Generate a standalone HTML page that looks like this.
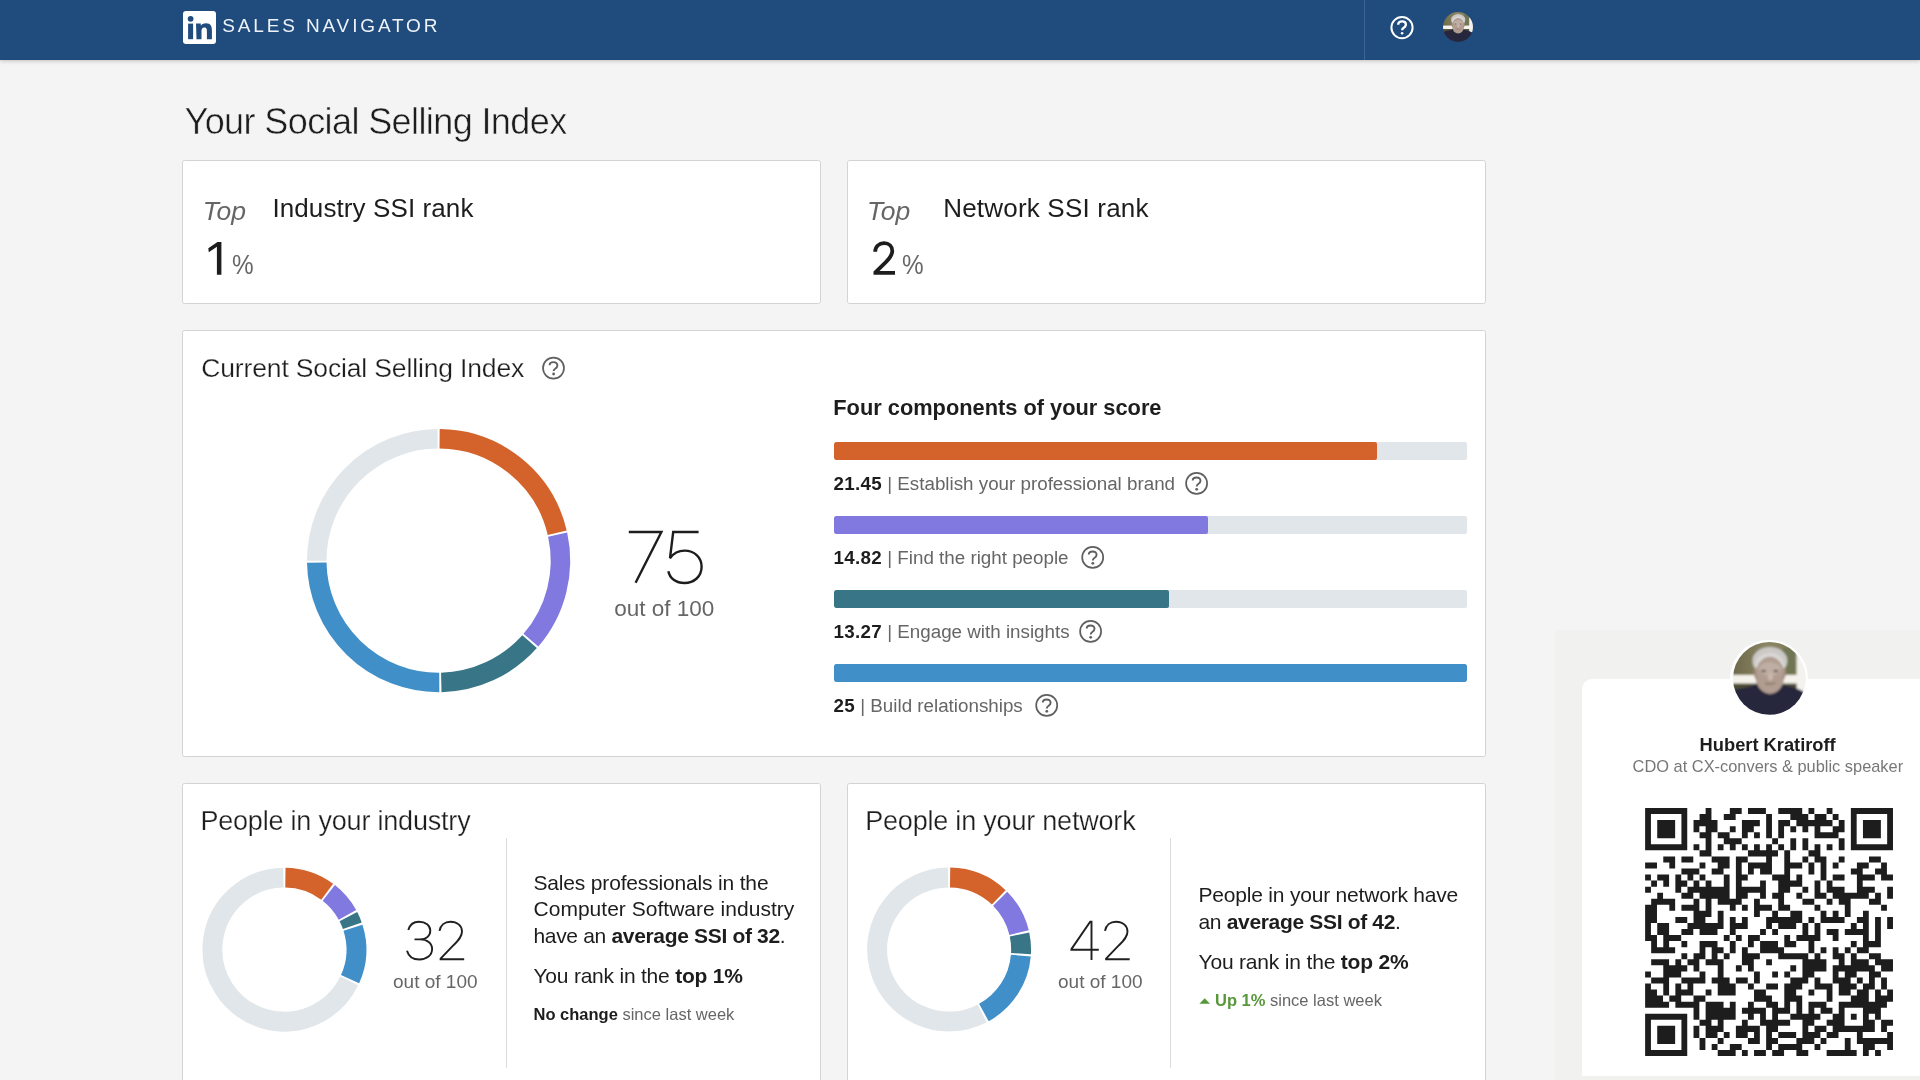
<!DOCTYPE html>
<html>
<head>
<meta charset="utf-8">
<title>Social Selling Index</title>
<style>
html,body{margin:0;padding:0;}
body{width:1920px;height:1080px;overflow:hidden;transform:translateZ(0);background:#f4f4f4;font-family:"Liberation Sans",sans-serif;color:#1d1d1d;position:relative;}
.abs{position:absolute;white-space:nowrap;line-height:1;}
#hdr{position:absolute;left:0;top:0;width:1920px;height:60px;background:#204b7d;box-shadow:0 1px 4px rgba(0,0,0,.22);}
.card{position:absolute;background:#fff;border:1px solid #d3d3d3;border-radius:2.5px;box-sizing:border-box;}
.g{color:#666;}
.thinw{-webkit-text-stroke:0.25px #fff;}
.thing{-webkit-text-stroke:0.5px #f4f4f4;}
.b{font-weight:bold;}
.bar{position:absolute;left:834px;width:633px;height:18px;background:#e1e6ea;border-radius:2px;overflow:hidden;}
.bar i{display:block;height:18px;border-radius:2px;}
.lbl{font-size:18.8px;color:#666;}
.lbl b{color:#1d1d1d;letter-spacing:.3px;}
.txt{font-size:21px;color:#1d1d1d;}
.sm{font-size:16.5px;color:#666;}
.sm b{color:#1d1d1d;}
svg{position:absolute;left:0;top:0;overflow:visible;}
</style>
</head>
<body>

<!-- photo symbol -->
<svg width="0" height="0" style="position:absolute">
<defs>
<filter id="blr" x="-10%" y="-10%" width="120%" height="120%"><feGaussianBlur stdDeviation="0.9"/></filter>
<clipPath id="cc"><circle cx="36.5" cy="36.5" r="36.5"/></clipPath>
<linearGradient id="bgG" x1="0" y1="0" x2="1" y2="0"><stop offset="0" stop-color="#6b6648"/><stop offset=".45" stop-color="#8a8463"/><stop offset="1" stop-color="#7c7a58"/></linearGradient>
<g id="photo" clip-path="url(#cc)">
 <g filter="url(#blr)">
  <rect x="-4" y="-4" width="81" height="81" fill="url(#bgG)"/>
  <rect x="50" y="6" width="12" height="27" fill="#6f7553"/>
  <rect x="-4" y="33" width="70" height="8.8" fill="#f5f2ec"/>
  <rect x="-4" y="41.8" width="70" height="6" fill="#4e4b36"/>
  <rect x="63.8" y="10" width="14" height="42" fill="#f4f2ee"/>
  <path d="M-4 48C6 47 17 45 23 42.5H47C56 44 65 46 71 50L77 77H-4Z" fill="#25283c"/>
  <path d="M25 40H46V47C42 53 30 53 25 47Z" fill="#a48c7e"/>
  <path d="M23.5 42.5C27 54 44 54 47.5 42.5" fill="none" stroke="#15172a" stroke-width="2"/>
  <ellipse cx="37" cy="19" rx="17.5" ry="14" fill="#cbc9c6"/>
  <path d="M22 28C22 16 28 11 37 11S52 16 52 28" fill="#d9d8d6"/>
  <ellipse cx="37" cy="33.5" rx="14.6" ry="18.6" fill="#b09c90"/>
  <ellipse cx="37" cy="27" rx="11" ry="7" fill="#bfaea3"/>
  <ellipse cx="30.6" cy="29.2" rx="2.6" ry="1.1" fill="#5d4d45"/>
  <ellipse cx="43" cy="29.2" rx="2.6" ry="1.1" fill="#5d4d45"/>
  <ellipse cx="37.5" cy="35" rx="2.6" ry="3.4" fill="#cdb7aa"/>
  <path d="M32.5 41.2C35 42.4 40 42.4 42.5 40.8" fill="none" stroke="#8d6c62" stroke-width="1.3"/>
  <path d="M22.4 26C21 30 22 34 24 37M51.6 26C53 30 52 34 50 37" fill="none" stroke="#a08878" stroke-width="2"/>
 </g>
</g>
</defs>
</svg>

<!-- HEADER -->
<div id="hdr">
  <div class="abs" style="left:183px;top:11px;width:33px;height:33px;background:#fff;border-radius:3px;"></div>
  <svg width="1920" height="60" viewBox="0 0 1920 60">
    <!-- "in" glyph -->
    <g fill="#204b7d" transform="translate(-0.6 -0.4)">
      <circle cx="191.2" cy="19.2" r="2.9"/>
      <rect x="188.7" y="24" width="5" height="15.6"/>
      <path d="M196.6 24h4.8v2.2c.8-1.4 2.6-2.6 5.2-2.6 5 0 5.9 3.3 5.9 7.5v8.5h-5v-7.5c0-1.8 0-4.1-2.5-4.1s-2.9 2-2.9 4v7.6h-5z"/>
    </g>
    <line x1="1364.5" y1="0" x2="1364.5" y2="60" stroke="#3d6593" stroke-width="1"/>
    <!-- help -->
    <circle cx="1402" cy="27.6" r="10.6" fill="none" stroke="#fff" stroke-width="2"/>
    <path d="M1398.2 24.7c0-2.1 1.6-3.4 3.9-3.4s3.8 1.3 3.8 3.3c0 1.6-1 2.4-2.1 3.1c-1.1.7-1.7 1.3-1.7 2.6" fill="none" stroke="#fff" stroke-width="2.3"/>
    <circle cx="1402.1" cy="33.3" r="1.3" fill="#fff"/>
  </svg>
  <div class="abs" id="salesnav" style="left:222.3px;top:15.9px;font-size:19px;letter-spacing:2.85px;color:#eef3f9;">SALES NAVIGATOR</div>
  <!-- avatar small -->
  <svg style="left:1442.5px;top:12px" width="30" height="30" viewBox="0 0 73 73"><use href="#photo"/></svg>
</div>

<!-- TITLE -->
<div class="abs thing" id="title" style="left:184.6px;top:103.73px;font-size:36px;letter-spacing:-0.6px;">Your Social Selling Index</div>

<!-- TOP CARDS -->
<div class="card" style="left:182.2px;top:159.9px;width:639.2px;height:144.6px;"></div>
<div class="card" style="left:846.9px;top:159.9px;width:639.4px;height:144.6px;"></div>

<div class="abs g" id="top1" style="left:202.7px;top:198.4px;font-size:26.5px;font-style:italic;">Top</div>
<div class="abs" id="ind_rank" style="left:272.4px;top:194.69px;font-size:26px;letter-spacing:0.1px;">Industry SSI rank</div>
<div class="abs g" id="pct1" style="left:231.6px;top:251.74px;font-size:27px;transform:scaleX(.9);transform-origin:0 0;">%</div>

<div class="abs g" id="top2" style="left:866.9px;top:198.4px;font-size:26.5px;font-style:italic;">Top</div>
<div class="abs" id="net_rank" style="left:943.2px;top:194.69px;font-size:26px;letter-spacing:0.2px;">Network SSI rank</div>
<div class="abs g" id="pct2" style="left:901.8px;top:251.74px;font-size:27px;transform:scaleX(.9);transform-origin:0 0;">%</div>

<!-- MAIN CARD -->
<div class="card" style="left:182.2px;top:329.9px;width:1304.1px;height:427px;"></div>
<div class="abs thinw" id="cur" style="left:201.3px;top:354.67px;font-size:26.5px;letter-spacing:-0.15px;">Current Social Selling Index</div>

<div class="abs b" id="four" style="left:833.3px;top:396.95px;font-size:21.8px;">Four components of your score</div>

<div class="bar" style="top:442px;"><i style="width:543px;background:#d4622b;"></i></div>
<div class="bar" style="top:516px;"><i style="width:374px;background:#8178e0;"></i></div>
<div class="bar" style="top:590px;"><i style="width:335px;background:#377587;"></i></div>
<div class="bar" style="top:664px;"><i style="width:633px;background:#408fc8;"></i></div>

<div class="abs lbl" id="l1" style="left:833.5px;top:474.82px;"><b>21.45</b> | Establish your professional brand</div>
<div class="abs lbl" id="l2" style="left:833.5px;top:548.82px;"><b>14.82</b> | Find the right people</div>
<div class="abs lbl" id="l3" style="left:833.5px;top:622.82px;"><b>13.27</b> | Engage with insights</div>
<div class="abs lbl" id="l4" style="left:833.5px;top:696.82px;"><b>25</b> | Build relationships</div>

<div class="abs g" id="out1" style="left:614.3px;top:597.95px;font-size:22.5px;">out of 100</div>

<!-- BOTTOM CARDS -->
<div class="card" style="left:182.2px;top:782.5px;width:639.2px;height:320px;"></div>
<div class="card" style="left:846.9px;top:782.5px;width:639.4px;height:320px;"></div>
<div class="abs thinw" id="pind" style="left:200.4px;top:807.8px;font-size:27px;letter-spacing:-0.2px;">People in your industry</div>
<div class="abs thinw" id="pnet" style="left:865.2px;top:807.8px;font-size:27px;letter-spacing:-0.2px;">People in your network</div>
<div class="abs" style="left:505.5px;top:838px;width:1px;height:230px;background:#dcdcdc;"></div>
<div class="abs" style="left:1170px;top:838px;width:1px;height:230px;background:#dcdcdc;"></div>

<div class="abs g" id="out2" style="left:393px;top:971.92px;font-size:19px;">out of 100</div>
<div class="abs g" id="out3" style="left:1058px;top:971.92px;font-size:19px;">out of 100</div>

<div class="abs txt" id="t1a" style="left:533.5px;top:872.02px;letter-spacing:-0.17px;">Sales professionals in the</div>
<div class="abs txt" id="t1b" style="left:533.5px;top:898.42px;letter-spacing:0.02px;">Computer Software industry</div>
<div class="abs txt" id="t1c" style="left:533.5px;top:924.92px;letter-spacing:-0.33px;">have an <b>average SSI of 32</b>.</div>
<div class="abs txt" id="t1d" style="left:533.5px;top:964.52px;letter-spacing:-0.22px;">You rank in the <b>top 1%</b></div>
<div class="abs sm" id="t1e" style="left:533.5px;top:1005.93px;"><b>No change</b> since last week</div>

<div class="abs txt" id="t2a" style="left:1198.5px;top:884.12px;letter-spacing:-0.2px;">People in your network have</div>
<div class="abs txt" id="t2b" style="left:1198.5px;top:911.02px;letter-spacing:-0.33px;">an <b>average SSI of 42</b>.</div>
<div class="abs txt" id="t2c" style="left:1198.5px;top:951.12px;letter-spacing:-0.18px;">You rank in the <b>top 2%</b></div>
<div class="abs sm" id="t2d" style="left:1215px;top:991.93px;"><b style="color:#57983a;">Up 1%</b> since last week</div>

<!-- SVG LAYER: donuts, big numerals, help icons -->
<svg width="1920" height="1080" viewBox="0 0 1920 1080">
<path d="M439.60 438.75A121.85 121.85 0 0 1 557.21 532.67" fill="none" stroke="#d4622b" stroke-width="19.5"/>
<path d="M557.65 534.62A121.85 121.85 0 0 1 530.91 640.14" fill="none" stroke="#8178e0" stroke-width="19.5"/>
<path d="M529.59 641.64A121.85 121.85 0 0 1 441.28 682.42" fill="none" stroke="#377587" stroke-width="19.5"/>
<path d="M439.28 682.45A121.85 121.85 0 0 1 316.77 562.67" fill="none" stroke="#408fc8" stroke-width="19.5"/>
<path d="M316.75 560.67A121.85 121.85 0 0 1 437.60 438.75" fill="none" stroke="#e1e6ea" stroke-width="19.5"/>
<path d="M285.40 877.61A72.0 72.0 0 0 1 327.19 891.70" fill="none" stroke="#d4622b" stroke-width="19.9"/>
<path d="M328.78 892.91A72.0 72.0 0 0 1 347.45 914.83" fill="none" stroke="#8178e0" stroke-width="19.9"/>
<path d="M348.39 916.59A72.0 72.0 0 0 1 352.34 925.76" fill="none" stroke="#377587" stroke-width="19.9"/>
<path d="M352.97 927.66A72.0 72.0 0 0 1 350.06 979.14" fill="none" stroke="#408fc8" stroke-width="19.9"/>
<path d="M349.21 980.95A72.0 72.0 0 1 1 283.40 877.61" fill="none" stroke="#e1e6ea" stroke-width="19.9"/>
<path d="M950.10 877.51A72.0 72.0 0 0 1 998.75 897.35" fill="none" stroke="#d4622b" stroke-width="19.9"/>
<path d="M1000.17 898.75A72.0 72.0 0 0 1 1019.08 932.56" fill="none" stroke="#8178e0" stroke-width="19.9"/>
<path d="M1019.52 934.51A72.0 72.0 0 0 1 1020.98 953.61" fill="none" stroke="#377587" stroke-width="19.9"/>
<path d="M1020.84 955.60A72.0 72.0 0 0 1 983.91 1012.53" fill="none" stroke="#408fc8" stroke-width="19.9"/>
<path d="M982.15 1013.47A72.0 72.0 0 1 1 948.10 877.51" fill="none" stroke="#e1e6ea" stroke-width="19.9"/>
<!-- 75 -->
<g fill="none" stroke="#1d1d1d" stroke-width="2.4" stroke-linejoin="miter">
  <path d="M628.8 532h32.6L635.6 582.8"/>
  <path d="M698.6 532H673.2L670 558.2c3.2-4.6 8.4-7.6 14.6-7.6c9.6 0 17 6.6 17 16.2s-7.4 16.2-17.2 16.2c-8.4 0-14.8-4.8-16-11.8"/>
</g>
<!-- 1 and 2 (top cards) -->
<path d="M221.4 241.9H217.5L208.3 248.3L208.8 252.3L216.9 246.7V274.7H221.4Z" fill="#1d1d1d"/>
<path d="M875.2 251.8C875.2 246.6 879 243.1 884 243.1C889 243.1 892.3 246.5 892.3 250.9C892.3 255.4 889.6 258.5 885.6 262.4L875.4 272.4V272.8H895" fill="none" stroke="#1d1d1d" stroke-width="3.8"/>
<!-- 32 -->
<g fill="none" stroke="#202020" stroke-width="1.9">
<path d="M408.3 930.1C409.6 925 413.6 921.7 419 921.7C425.6 921.7 430.3 925.4 430.3 930.5C430.3 935.6 426.6 939.4 420 939.4H414.5M420 939.4C427 939.4 432.1 943.2 432.1 949C432.1 955.2 426.8 959.5 419.4 959.5C412.8 959.5 408.4 955.8 407 950.7"/>
<path id="two32" d="M439.5 930.9C440.4 925.4 444.6 921.7 450.5 921.7C457 921.7 462 925.6 462 931.4C462 936.5 458.5 940.3 453.5 945.2L440.6 958.6V959.2H464.2"/>
<!-- 42 -->
<path d="M1091.5 960V921.6H1090.2L1071.4 949.1V949.7H1098.8"/>
<path d="M439.5 930.9C440.4 925.4 444.6 921.7 450.5 921.7C457 921.7 462 925.6 462 931.4C462 936.5 458.5 940.3 453.5 945.2L440.6 958.6V959.2H464.2" transform="translate(665.5 0)"/>
</g>
<!-- help icons -->
<defs><g id="help" fill="none" stroke="#5f5f5f" stroke-width="1.7"><circle cx="0" cy="0" r="10.5"/><path d="M-3.9 -2.9C-3.9 -4.9 -2.2 -5.95 0 -5.95S3.9 -4.7 3.9 -2.6C3.9 -0.9 2.8 -0.1 1.7 0.6C0.6 1.3 0.1 1.8 0.1 3" stroke-width="1.9"/><circle cx="0.1" cy="5.9" r="1.4" fill="#5f5f5f" stroke="none"/></g></defs>
<use href="#help" x="553.5" y="368.1"/>
<use href="#help" x="1196.6" y="483.4"/>
<use href="#help" x="1092.7" y="557.4"/>
<use href="#help" x="1090.6" y="631.4"/>
<use href="#help" x="1046.7" y="705.4"/>
<!-- triangle up -->
<path d="M1199.4 1003.8l5.3-5.6l5.3 5.6z" fill="#57983a"/>
</svg>

<!-- RIGHT OVERLAY -->
<div class="abs" style="left:1555px;top:630px;width:365px;height:450px;background:#f1f1ef;"></div>
<div class="abs" style="left:1581.7px;top:678.7px;width:340px;height:397px;background:#fff;border-top-left-radius:10px;"></div>
<div class="abs" id="avatar" style="left:1730.4px;top:640px;width:77.2px;height:77.2px;border-radius:50%;background:#fff;"></div>
<svg style="left:1732.7px;top:642.2px" width="72.8" height="72.8" viewBox="0 0 73 73"><use href="#photo"/></svg>
<div class="abs b" id="name" style="left:1699.6px;top:735.51px;font-size:18.3px;">Hubert Kratiroff</div>
<div class="abs g" id="sub" style="left:1632.6px;top:757.62px;font-size:16.4px;color:#777;">CDO at CX-convers &amp; public speaker</div>
<svg style="position:absolute;left:1644.6px;top:808.2px" width="248.1" height="248.1" viewBox="0 0 41 41"><path d="M0.02 0h6.96v1h-6.96zM10.02 0h0.96v1h-0.96zM14.02 0h1.96v1h-1.96zM17.02 0h2.96v1h-2.96zM22.02 0h3.96v1h-3.96zM27.02 0h0.96v1h-0.96zM30.02 0h0.96v1h-0.96zM34.02 0h6.96v1h-6.96zM0.02 1h0.96v1h-0.96zM6.02 1h0.96v1h-0.96zM9.02 1h1.96v1h-1.96zM13.02 1h1.96v1h-1.96zM20.02 1h0.96v1h-0.96zM24.02 1h2.96v1h-2.96zM28.02 1h1.96v1h-1.96zM31.02 1h0.96v1h-0.96zM34.02 1h0.96v1h-0.96zM40.02 1h0.96v1h-0.96zM0.02 2h0.96v1h-0.96zM2.02 2h2.96v1h-2.96zM6.02 2h0.96v1h-0.96zM8.02 2h3.96v1h-3.96zM16.02 2h2.96v1h-2.96zM20.02 2h0.96v1h-0.96zM22.02 2h1.96v1h-1.96zM25.02 2h5.96v1h-5.96zM32.02 2h0.96v1h-0.96zM34.02 2h0.96v1h-0.96zM36.02 2h2.96v1h-2.96zM40.02 2h0.96v1h-0.96zM0.02 3h0.96v1h-0.96zM2.02 3h2.96v1h-2.96zM6.02 3h0.96v1h-0.96zM8.02 3h0.96v1h-0.96zM10.02 3h1.96v1h-1.96zM14.02 3h0.96v1h-0.96zM16.02 3h1.96v1h-1.96zM20.02 3h0.96v1h-0.96zM22.02 3h0.96v1h-0.96zM24.02 3h0.96v1h-0.96zM26.02 3h0.96v1h-0.96zM28.02 3h0.96v1h-0.96zM31.02 3h1.96v1h-1.96zM34.02 3h0.96v1h-0.96zM36.02 3h2.96v1h-2.96zM40.02 3h0.96v1h-0.96zM0.02 4h0.96v1h-0.96zM2.02 4h2.96v1h-2.96zM6.02 4h0.96v1h-0.96zM9.02 4h1.96v1h-1.96zM12.02 4h1.96v1h-1.96zM16.02 4h0.96v1h-0.96zM18.02 4h0.96v1h-0.96zM20.02 4h0.96v1h-0.96zM22.02 4h0.96v1h-0.96zM28.02 4h3.96v1h-3.96zM34.02 4h0.96v1h-0.96zM36.02 4h2.96v1h-2.96zM40.02 4h0.96v1h-0.96zM0.02 5h0.96v1h-0.96zM6.02 5h0.96v1h-0.96zM10.02 5h0.96v1h-0.96zM13.02 5h2.96v1h-2.96zM21.02 5h0.96v1h-0.96zM24.02 5h0.96v1h-0.96zM26.02 5h0.96v1h-0.96zM32.02 5h0.96v1h-0.96zM34.02 5h0.96v1h-0.96zM40.02 5h0.96v1h-0.96zM0.02 6h6.96v1h-6.96zM8.02 6h0.96v1h-0.96zM10.02 6h0.96v1h-0.96zM12.02 6h0.96v1h-0.96zM14.02 6h0.96v1h-0.96zM16.02 6h0.96v1h-0.96zM18.02 6h0.96v1h-0.96zM20.02 6h0.96v1h-0.96zM22.02 6h0.96v1h-0.96zM24.02 6h0.96v1h-0.96zM26.02 6h0.96v1h-0.96zM28.02 6h0.96v1h-0.96zM30.02 6h0.96v1h-0.96zM32.02 6h0.96v1h-0.96zM34.02 6h6.96v1h-6.96zM9.02 7h1.96v1h-1.96zM17.02 7h4.96v1h-4.96zM23.02 7h0.96v1h-0.96zM27.02 7h1.96v1h-1.96zM3.02 8h1.96v1h-1.96zM6.02 8h1.96v1h-1.96zM11.02 8h2.96v1h-2.96zM15.02 8h1.96v1h-1.96zM20.02 8h0.96v1h-0.96zM23.02 8h0.96v1h-0.96zM26.02 8h0.96v1h-0.96zM28.02 8h1.96v1h-1.96zM32.02 8h0.96v1h-0.96zM37.02 8h1.96v1h-1.96zM0.02 9h1.96v1h-1.96zM4.02 9h0.96v1h-0.96zM9.02 9h0.96v1h-0.96zM12.02 9h1.96v1h-1.96zM15.02 9h0.96v1h-0.96zM17.02 9h3.96v1h-3.96zM23.02 9h2.96v1h-2.96zM27.02 9h0.96v1h-0.96zM29.02 9h0.96v1h-0.96zM31.02 9h0.96v1h-0.96zM35.02 9h1.96v1h-1.96zM39.02 9h0.96v1h-0.96zM6.02 10h2.96v1h-2.96zM11.02 10h1.96v1h-1.96zM15.02 10h0.96v1h-0.96zM17.02 10h0.96v1h-0.96zM19.02 10h1.96v1h-1.96zM23.02 10h0.96v1h-0.96zM27.02 10h0.96v1h-0.96zM29.02 10h0.96v1h-0.96zM34.02 10h1.96v1h-1.96zM38.02 10h1.96v1h-1.96zM0.02 11h0.96v1h-0.96zM2.02 11h1.96v1h-1.96zM5.02 11h0.96v1h-0.96zM7.02 11h0.96v1h-0.96zM9.02 11h0.96v1h-0.96zM13.02 11h0.96v1h-0.96zM15.02 11h1.96v1h-1.96zM21.02 11h2.96v1h-2.96zM25.02 11h0.96v1h-0.96zM29.02 11h0.96v1h-0.96zM31.02 11h1.96v1h-1.96zM35.02 11h2.96v1h-2.96zM39.02 11h1.96v1h-1.96zM1.02 12h0.96v1h-0.96zM3.02 12h0.96v1h-0.96zM5.02 12h1.96v1h-1.96zM8.02 12h0.96v1h-0.96zM10.02 12h0.96v1h-0.96zM13.02 12h0.96v1h-0.96zM15.02 12h0.96v1h-0.96zM19.02 12h0.96v1h-0.96zM22.02 12h3.96v1h-3.96zM28.02 12h0.96v1h-0.96zM30.02 12h0.96v1h-0.96zM35.02 12h0.96v1h-0.96zM0.02 13h0.96v1h-0.96zM5.02 13h0.96v1h-0.96zM7.02 13h6.96v1h-6.96zM15.02 13h4.96v1h-4.96zM22.02 13h1.96v1h-1.96zM26.02 13h0.96v1h-0.96zM28.02 13h0.96v1h-0.96zM30.02 13h2.96v1h-2.96zM35.02 13h2.96v1h-2.96zM40.02 13h0.96v1h-0.96zM2.02 14h0.96v1h-0.96zM6.02 14h1.96v1h-1.96zM9.02 14h4.96v1h-4.96zM15.02 14h1.96v1h-1.96zM19.02 14h0.96v1h-0.96zM21.02 14h1.96v1h-1.96zM25.02 14h0.96v1h-0.96zM28.02 14h1.96v1h-1.96zM31.02 14h5.96v1h-5.96zM38.02 14h0.96v1h-0.96zM40.02 14h0.96v1h-0.96zM1.02 15h3.96v1h-3.96zM8.02 15h0.96v1h-0.96zM10.02 15h0.96v1h-0.96zM12.02 15h3.96v1h-3.96zM18.02 15h0.96v1h-0.96zM22.02 15h0.96v1h-0.96zM26.02 15h1.96v1h-1.96zM30.02 15h0.96v1h-0.96zM32.02 15h1.96v1h-1.96zM37.02 15h1.96v1h-1.96zM0.02 16h1.96v1h-1.96zM4.02 16h0.96v1h-0.96zM6.02 16h2.96v1h-2.96zM10.02 16h0.96v1h-0.96zM14.02 16h0.96v1h-0.96zM16.02 16h0.96v1h-0.96zM18.02 16h2.96v1h-2.96zM22.02 16h1.96v1h-1.96zM28.02 16h0.96v1h-0.96zM33.02 16h0.96v1h-0.96zM39.02 16h0.96v1h-0.96zM0.02 17h1.96v1h-1.96zM8.02 17h2.96v1h-2.96zM12.02 17h0.96v1h-0.96zM18.02 17h0.96v1h-0.96zM21.02 17h0.96v1h-0.96zM24.02 17h1.96v1h-1.96zM29.02 17h0.96v1h-0.96zM31.02 17h0.96v1h-0.96zM33.02 17h0.96v1h-0.96zM36.02 17h0.96v1h-0.96zM0.02 18h1.96v1h-1.96zM5.02 18h1.96v1h-1.96zM8.02 18h1.96v1h-1.96zM12.02 18h0.96v1h-0.96zM14.02 18h0.96v1h-0.96zM16.02 18h0.96v1h-0.96zM20.02 18h5.96v1h-5.96zM27.02 18h0.96v1h-0.96zM29.02 18h3.96v1h-3.96zM35.02 18h1.96v1h-1.96zM38.02 18h0.96v1h-0.96zM40.02 18h0.96v1h-0.96zM0.02 19h0.96v1h-0.96zM2.02 19h1.96v1h-1.96zM7.02 19h5.96v1h-5.96zM14.02 19h2.96v1h-2.96zM20.02 19h0.96v1h-0.96zM22.02 19h2.96v1h-2.96zM26.02 19h0.96v1h-0.96zM28.02 19h0.96v1h-0.96zM34.02 19h0.96v1h-0.96zM36.02 19h0.96v1h-0.96zM38.02 19h0.96v1h-0.96zM40.02 19h0.96v1h-0.96zM0.02 20h0.96v1h-0.96zM2.02 20h1.96v1h-1.96zM6.02 20h1.96v1h-1.96zM9.02 20h2.96v1h-2.96zM14.02 20h0.96v1h-0.96zM19.02 20h0.96v1h-0.96zM21.02 20h0.96v1h-0.96zM26.02 20h0.96v1h-0.96zM28.02 20h0.96v1h-0.96zM30.02 20h1.96v1h-1.96zM33.02 20h3.96v1h-3.96zM38.02 20h0.96v1h-0.96zM0.02 21h1.96v1h-1.96zM3.02 21h2.96v1h-2.96zM13.02 21h0.96v1h-0.96zM15.02 21h0.96v1h-0.96zM17.02 21h1.96v1h-1.96zM23.02 21h0.96v1h-0.96zM25.02 21h3.96v1h-3.96zM31.02 21h0.96v1h-0.96zM36.02 21h0.96v1h-0.96zM38.02 21h0.96v1h-0.96zM1.02 22h0.96v1h-0.96zM3.02 22h0.96v1h-0.96zM6.02 22h0.96v1h-0.96zM9.02 22h2.96v1h-2.96zM14.02 22h0.96v1h-0.96zM17.02 22h0.96v1h-0.96zM19.02 22h2.96v1h-2.96zM23.02 22h1.96v1h-1.96zM27.02 22h0.96v1h-0.96zM34.02 22h0.96v1h-0.96zM36.02 22h2.96v1h-2.96zM1.02 23h3.96v1h-3.96zM9.02 23h0.96v1h-0.96zM11.02 23h1.96v1h-1.96zM14.02 23h0.96v1h-0.96zM16.02 23h0.96v1h-0.96zM19.02 23h3.96v1h-3.96zM27.02 23h0.96v1h-0.96zM29.02 23h0.96v1h-0.96zM31.02 23h0.96v1h-0.96zM33.02 23h0.96v1h-0.96zM35.02 23h1.96v1h-1.96zM6.02 24h0.96v1h-0.96zM8.02 24h1.96v1h-1.96zM11.02 24h0.96v1h-0.96zM13.02 24h0.96v1h-0.96zM16.02 24h2.96v1h-2.96zM22.02 24h4.96v1h-4.96zM28.02 24h0.96v1h-0.96zM31.02 24h1.96v1h-1.96zM34.02 24h0.96v1h-0.96zM37.02 24h1.96v1h-1.96zM1.02 25h2.96v1h-2.96zM5.02 25h0.96v1h-0.96zM7.02 25h1.96v1h-1.96zM10.02 25h2.96v1h-2.96zM16.02 25h1.96v1h-1.96zM20.02 25h0.96v1h-0.96zM26.02 25h3.96v1h-3.96zM32.02 25h0.96v1h-0.96zM34.02 25h2.96v1h-2.96zM38.02 25h2.96v1h-2.96zM3.02 26h3.96v1h-3.96zM8.02 26h0.96v1h-0.96zM12.02 26h0.96v1h-0.96zM15.02 26h0.96v1h-0.96zM17.02 26h0.96v1h-0.96zM24.02 26h0.96v1h-0.96zM26.02 26h3.96v1h-3.96zM31.02 26h6.96v1h-6.96zM39.02 26h1.96v1h-1.96zM0.02 27h0.96v1h-0.96zM3.02 27h2.96v1h-2.96zM9.02 27h0.96v1h-0.96zM12.02 27h0.96v1h-0.96zM18.02 27h0.96v1h-0.96zM21.02 27h0.96v1h-0.96zM23.02 27h0.96v1h-0.96zM26.02 27h1.96v1h-1.96zM31.02 27h0.96v1h-0.96zM33.02 27h1.96v1h-1.96zM37.02 27h1.96v1h-1.96zM1.02 28h2.96v1h-2.96zM6.02 28h3.96v1h-3.96zM11.02 28h2.96v1h-2.96zM15.02 28h1.96v1h-1.96zM18.02 28h0.96v1h-0.96zM24.02 28h2.96v1h-2.96zM28.02 28h0.96v1h-0.96zM31.02 28h2.96v1h-2.96zM35.02 28h0.96v1h-0.96zM37.02 28h0.96v1h-0.96zM39.02 28h0.96v1h-0.96zM0.02 29h0.96v1h-0.96zM3.02 29h0.96v1h-0.96zM5.02 29h0.96v1h-0.96zM7.02 29h0.96v1h-0.96zM12.02 29h2.96v1h-2.96zM17.02 29h0.96v1h-0.96zM20.02 29h1.96v1h-1.96zM23.02 29h2.96v1h-2.96zM28.02 29h2.96v1h-2.96zM32.02 29h2.96v1h-2.96zM36.02 29h1.96v1h-1.96zM39.02 29h0.96v1h-0.96zM0.02 30h1.96v1h-1.96zM3.02 30h0.96v1h-0.96zM5.02 30h2.96v1h-2.96zM10.02 30h0.96v1h-0.96zM12.02 30h2.96v1h-2.96zM18.02 30h1.96v1h-1.96zM23.02 30h1.96v1h-1.96zM27.02 30h0.96v1h-0.96zM30.02 30h0.96v1h-0.96zM32.02 30h1.96v1h-1.96zM35.02 30h1.96v1h-1.96zM38.02 30h0.96v1h-0.96zM40.02 30h0.96v1h-0.96zM0.02 31h2.96v1h-2.96zM4.02 31h1.96v1h-1.96zM8.02 31h1.96v1h-1.96zM18.02 31h2.96v1h-2.96zM23.02 31h2.96v1h-2.96zM30.02 31h0.96v1h-0.96zM34.02 31h2.96v1h-2.96zM38.02 31h2.96v1h-2.96zM0.02 32h3.96v1h-3.96zM5.02 32h3.96v1h-3.96zM10.02 32h2.96v1h-2.96zM14.02 32h0.96v1h-0.96zM17.02 32h0.96v1h-0.96zM20.02 32h1.96v1h-1.96zM23.02 32h0.96v1h-0.96zM25.02 32h0.96v1h-0.96zM27.02 32h2.96v1h-2.96zM32.02 32h7.96v1h-7.96zM8.02 33h0.96v1h-0.96zM10.02 33h4.96v1h-4.96zM16.02 33h3.96v1h-3.96zM21.02 33h2.96v1h-2.96zM25.02 33h0.96v1h-0.96zM27.02 33h0.96v1h-0.96zM29.02 33h1.96v1h-1.96zM32.02 33h0.96v1h-0.96zM36.02 33h2.96v1h-2.96zM0.02 34h6.96v1h-6.96zM8.02 34h0.96v1h-0.96zM10.02 34h4.96v1h-4.96zM17.02 34h0.96v1h-0.96zM19.02 34h0.96v1h-0.96zM21.02 34h0.96v1h-0.96zM24.02 34h4.96v1h-4.96zM31.02 34h1.96v1h-1.96zM34.02 34h0.96v1h-0.96zM36.02 34h0.96v1h-0.96zM38.02 34h0.96v1h-0.96zM0.02 35h0.96v1h-0.96zM6.02 35h0.96v1h-0.96zM9.02 35h1.96v1h-1.96zM12.02 35h0.96v1h-0.96zM16.02 35h0.96v1h-0.96zM19.02 35h4.96v1h-4.96zM26.02 35h1.96v1h-1.96zM30.02 35h2.96v1h-2.96zM36.02 35h1.96v1h-1.96zM39.02 35h1.96v1h-1.96zM0.02 36h0.96v1h-0.96zM2.02 36h2.96v1h-2.96zM6.02 36h0.96v1h-0.96zM8.02 36h0.96v1h-0.96zM10.02 36h2.96v1h-2.96zM15.02 36h3.96v1h-3.96zM20.02 36h1.96v1h-1.96zM26.02 36h0.96v1h-0.96zM28.02 36h1.96v1h-1.96zM31.02 36h6.96v1h-6.96zM39.02 36h0.96v1h-0.96zM0.02 37h0.96v1h-0.96zM2.02 37h2.96v1h-2.96zM6.02 37h0.96v1h-0.96zM8.02 37h0.96v1h-0.96zM10.02 37h1.96v1h-1.96zM13.02 37h0.96v1h-0.96zM15.02 37h1.96v1h-1.96zM18.02 37h0.96v1h-0.96zM20.02 37h0.96v1h-0.96zM22.02 37h2.96v1h-2.96zM26.02 37h2.96v1h-2.96zM30.02 37h1.96v1h-1.96zM35.02 37h0.96v1h-0.96zM40.02 37h0.96v1h-0.96zM0.02 38h0.96v1h-0.96zM2.02 38h2.96v1h-2.96zM6.02 38h0.96v1h-0.96zM9.02 38h0.96v1h-0.96zM12.02 38h0.96v1h-0.96zM17.02 38h1.96v1h-1.96zM20.02 38h1.96v1h-1.96zM25.02 38h2.96v1h-2.96zM29.02 38h0.96v1h-0.96zM33.02 38h0.96v1h-0.96zM35.02 38h5.96v1h-5.96zM0.02 39h0.96v1h-0.96zM6.02 39h0.96v1h-0.96zM9.02 39h0.96v1h-0.96zM11.02 39h0.96v1h-0.96zM14.02 39h1.96v1h-1.96zM20.02 39h0.96v1h-0.96zM22.02 39h3.96v1h-3.96zM28.02 39h0.96v1h-0.96zM33.02 39h0.96v1h-0.96zM36.02 39h1.96v1h-1.96zM40.02 39h0.96v1h-0.96zM0.02 40h6.96v1h-6.96zM12.02 40h2.96v1h-2.96zM16.02 40h0.96v1h-0.96zM18.02 40h1.96v1h-1.96zM21.02 40h1.96v1h-1.96zM25.02 40h1.96v1h-1.96zM30.02 40h4.96v1h-4.96zM36.02 40h0.96v1h-0.96zM38.02 40h0.96v1h-0.96z" fill="#1d1d1d"/></svg>

</body>
</html>
